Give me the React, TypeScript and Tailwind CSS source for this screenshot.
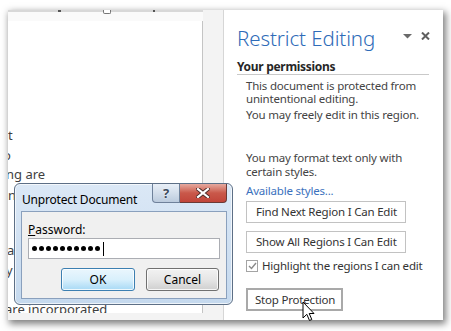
export default function App() {
  const dots = [0, 1, 2, 3, 4, 5, 6, 7, 8, 9];
  return (
    <div className="relative w-[451px] h-[331px] bg-white overflow-hidden font-['Noto_Sans',sans-serif] pt-[10px] pl-[8px]">
      {/* window */}
      <div className="flex w-[435px] h-[310px] bg-[#f3f3f3] shadow-[2px_3px_7px_1px_rgba(0,0,0,0.5)]">
        {/* document area */}
        <div className="w-[216px] h-full flex flex-col border-r border-[#d6d6d6]">
          <div className="relative w-[195px] h-[2px] bg-[#d8d8d8]">
            <div className="absolute left-[50px] top-0 w-[3px] h-[2px] bg-[#555]" />
            <div className="absolute left-[95px] top-0 w-[8px] h-[4px] bg-white border border-t-0 border-[#777] rounded-b-[2px]" />
            <div className="absolute left-[145px] top-0 w-[2px] h-[2px] bg-[#555]" />
          </div>
          <div className="w-[195px] h-[9px] bg-[#fafafa]" />
          <div className="w-[195px] h-[292px] bg-white border-r border-[#c4c4c4] overflow-hidden text-[13px] leading-[20px] text-[#3f3f3f] flex flex-col">
            <div className="mt-[104px]">t</div>
            <div className="ml-[-5px]">o</div>
            <div className="ml-[-2px] mt-[-1px]">ng are</div>
            <div className="mt-[1px]">n</div>
            <div className="mt-[35px] ml-[-1px]">a</div>
            <div className="mt-[0px] ml-[-2px]">y</div>
            <div className="mt-[19px] ml-[-3px]">are incorporated</div>
          </div>
        </div>
        {/* pane */}
        <div className="relative w-[219px] h-full bg-white pl-[13px] pt-[15px] text-[#444] text-[11.5px]">
          <div className="flex items-center h-[26px]">
            <span className="text-[20.5px] font-light leading-[26px] text-[#2e6bb8] tracking-[-0.1px]">Restrict Editing</span>
          </div>
          <svg className="absolute left-[179px] top-[24px]" width="9" height="5" viewBox="0 0 9 5">
            <path d="M0 0 L9 0 L4.5 4.5 Z" fill="#6a6a6a" />
          </svg>
          <svg className="absolute left-[197px] top-[22px]" width="9" height="8" viewBox="0 0 9 8">
            <path d="M1 0.5 L8 7.5 M8 0.5 L1 7.5" stroke="#5f5f5f" strokeWidth="2" />
          </svg>
          <div className="mt-[9px] w-[192px] h-[15px] border-b border-[#c9c9c9] text-[12px] font-bold text-[#262626] leading-[14px] tracking-[-0.3px]">
            Your permissions
          </div>
          <div className="pl-[9px] tracking-[-0.2px]">
            <div className="mt-[4px] leading-[13px]">
              This document is protected from
              <br />
              unintentional editing.
            </div>
            <div className="mt-[3px] leading-[13px]">You may freely edit in this region.</div>
            <div className="mt-[30px] leading-[14px]">
              You may format text only with
              <br />
              certain styles.
            </div>
            <div className="mt-[5px] leading-[14px] text-[#3b71bd]">Available styles...</div>
            <div className="mt-[3px] w-[160px] h-[22px] border border-[#c2c2c2] flex items-center pl-[9px] text-[#333]">
              Find Next Region I Can Edit
            </div>
            <div className="mt-[8px] w-[160px] h-[22px] border border-[#c2c2c2] flex items-center pl-[9px] text-[#333]">
              Show All Regions I Can Edit
            </div>
            <div className="mt-[6px] flex items-center h-[13px]">
              <div className="w-[12px] h-[12px] border border-[#a4a4a4] bg-white flex items-center justify-center">
                <svg width="9" height="8" viewBox="0 0 9 8">
                  <path d="M1 4 L3.5 6.5 L8 1" stroke="#8a8a8a" strokeWidth="1.4" fill="none" />
                </svg>
              </div>
              <span className="ml-[4px] text-[#333]">Highlight the regions I can edit</span>
            </div>
            <div className="mt-[16px] w-[97px] h-[23px] border-2 border-[#a9a9a9] flex items-center pl-[7px] text-[#333]">
              Stop Protection
            </div>
          </div>
        </div>
      </div>

      {/* Unprotect dialog */}
      <div className="absolute left-[14px] top-[183px] w-[219px] h-[122px] rounded-[6px] border border-[#5d6f86] bg-gradient-to-b from-[#dbe8f6] to-[#c5d9ee] shadow-[inset_0_0_0_1px_rgba(255,255,255,0.7)] text-[12px]">
        <div className="absolute left-[7px] top-[8px] text-[12px] leading-[16px] text-black tracking-[-0.2px]">Unprotect Document</div>
        <div className="absolute left-[137px] top-[0px] flex h-[19px]">
          <div className="w-[28px] h-full border border-t-0 border-[#6f819a] rounded-bl-[4px] bg-gradient-to-b from-[#e9eff7] via-[#d3deeb] to-[#bccbdd] flex items-center justify-center">
            <span className="text-[13px] font-bold leading-none text-[#3c4a5c] [text-shadow:0_0_2px_#fff]">?</span>
          </div>
          <div className="w-[47px] h-full border border-t-0 border-l-0 border-[#6b3a36] rounded-br-[4px] bg-gradient-to-b from-[#e5a99f] via-[#c9584a] to-[#c1453a] flex items-center justify-center">
            <svg width="14" height="10" viewBox="0 0 14 10">
              <path d="M2 1 L12 9 M12 1 L2 9" stroke="#4a2a28" strokeWidth="4" strokeLinecap="square" />
              <path d="M2 1 L12 9 M12 1 L2 9" stroke="#ffffff" strokeWidth="2.2" strokeLinecap="square" />
            </svg>
          </div>
        </div>
        <div className="absolute left-[6px] top-[27px] w-[206px] h-[88px] border border-[#8aa0bd] bg-[#f0f0f0]">
          <div className="absolute left-[6px] top-[10px] leading-[16px] text-black">
            <span className="underline">P</span>assword:
          </div>
          <div className="absolute left-[6px] top-[26px] w-[192px] h-[21px] border border-[#abadb3] bg-white flex items-center pl-[3px] gap-[2px]">
            {dots.map((d) => (
              <span key={d} className="w-[5px] h-[5px] rounded-full bg-black" />
            ))}
            <span className="ml-[1px] w-[1px] h-[14px] bg-black" />
          </div>
          <div className="absolute left-[39px] top-[56px] w-[74px] h-[23px] rounded-[3px] border border-[#3c7fb1] bg-gradient-to-b from-[#eaf6fd] via-[#d9f0fc] to-[#a7d9f5] shadow-[inset_0_0_0_1px_rgba(255,255,255,0.8)] flex items-center justify-center text-black">
            OK
          </div>
          <div className="absolute left-[124px] top-[56px] w-[73px] h-[23px] rounded-[3px] border border-[#707070] bg-gradient-to-b from-[#f2f2f2] via-[#e6e6e6] to-[#cfcfcf] shadow-[inset_0_0_0_1px_rgba(255,255,255,0.8)] flex items-center justify-center text-black">
            Cancel
          </div>
        </div>
      </div>

      {/* mouse cursor */}
      <svg className="absolute left-[302px] top-[301px]" width="13" height="21" viewBox="0 0 13 21">
        <path d="M1 1 L1 17 L4.8 13.3 L7.5 19.5 L9.8 18.5 L7.2 12.5 L12 12.5 Z" fill="#fff" stroke="#000" strokeWidth="1" strokeLinejoin="miter" />
      </svg>
    </div>
  );
}
